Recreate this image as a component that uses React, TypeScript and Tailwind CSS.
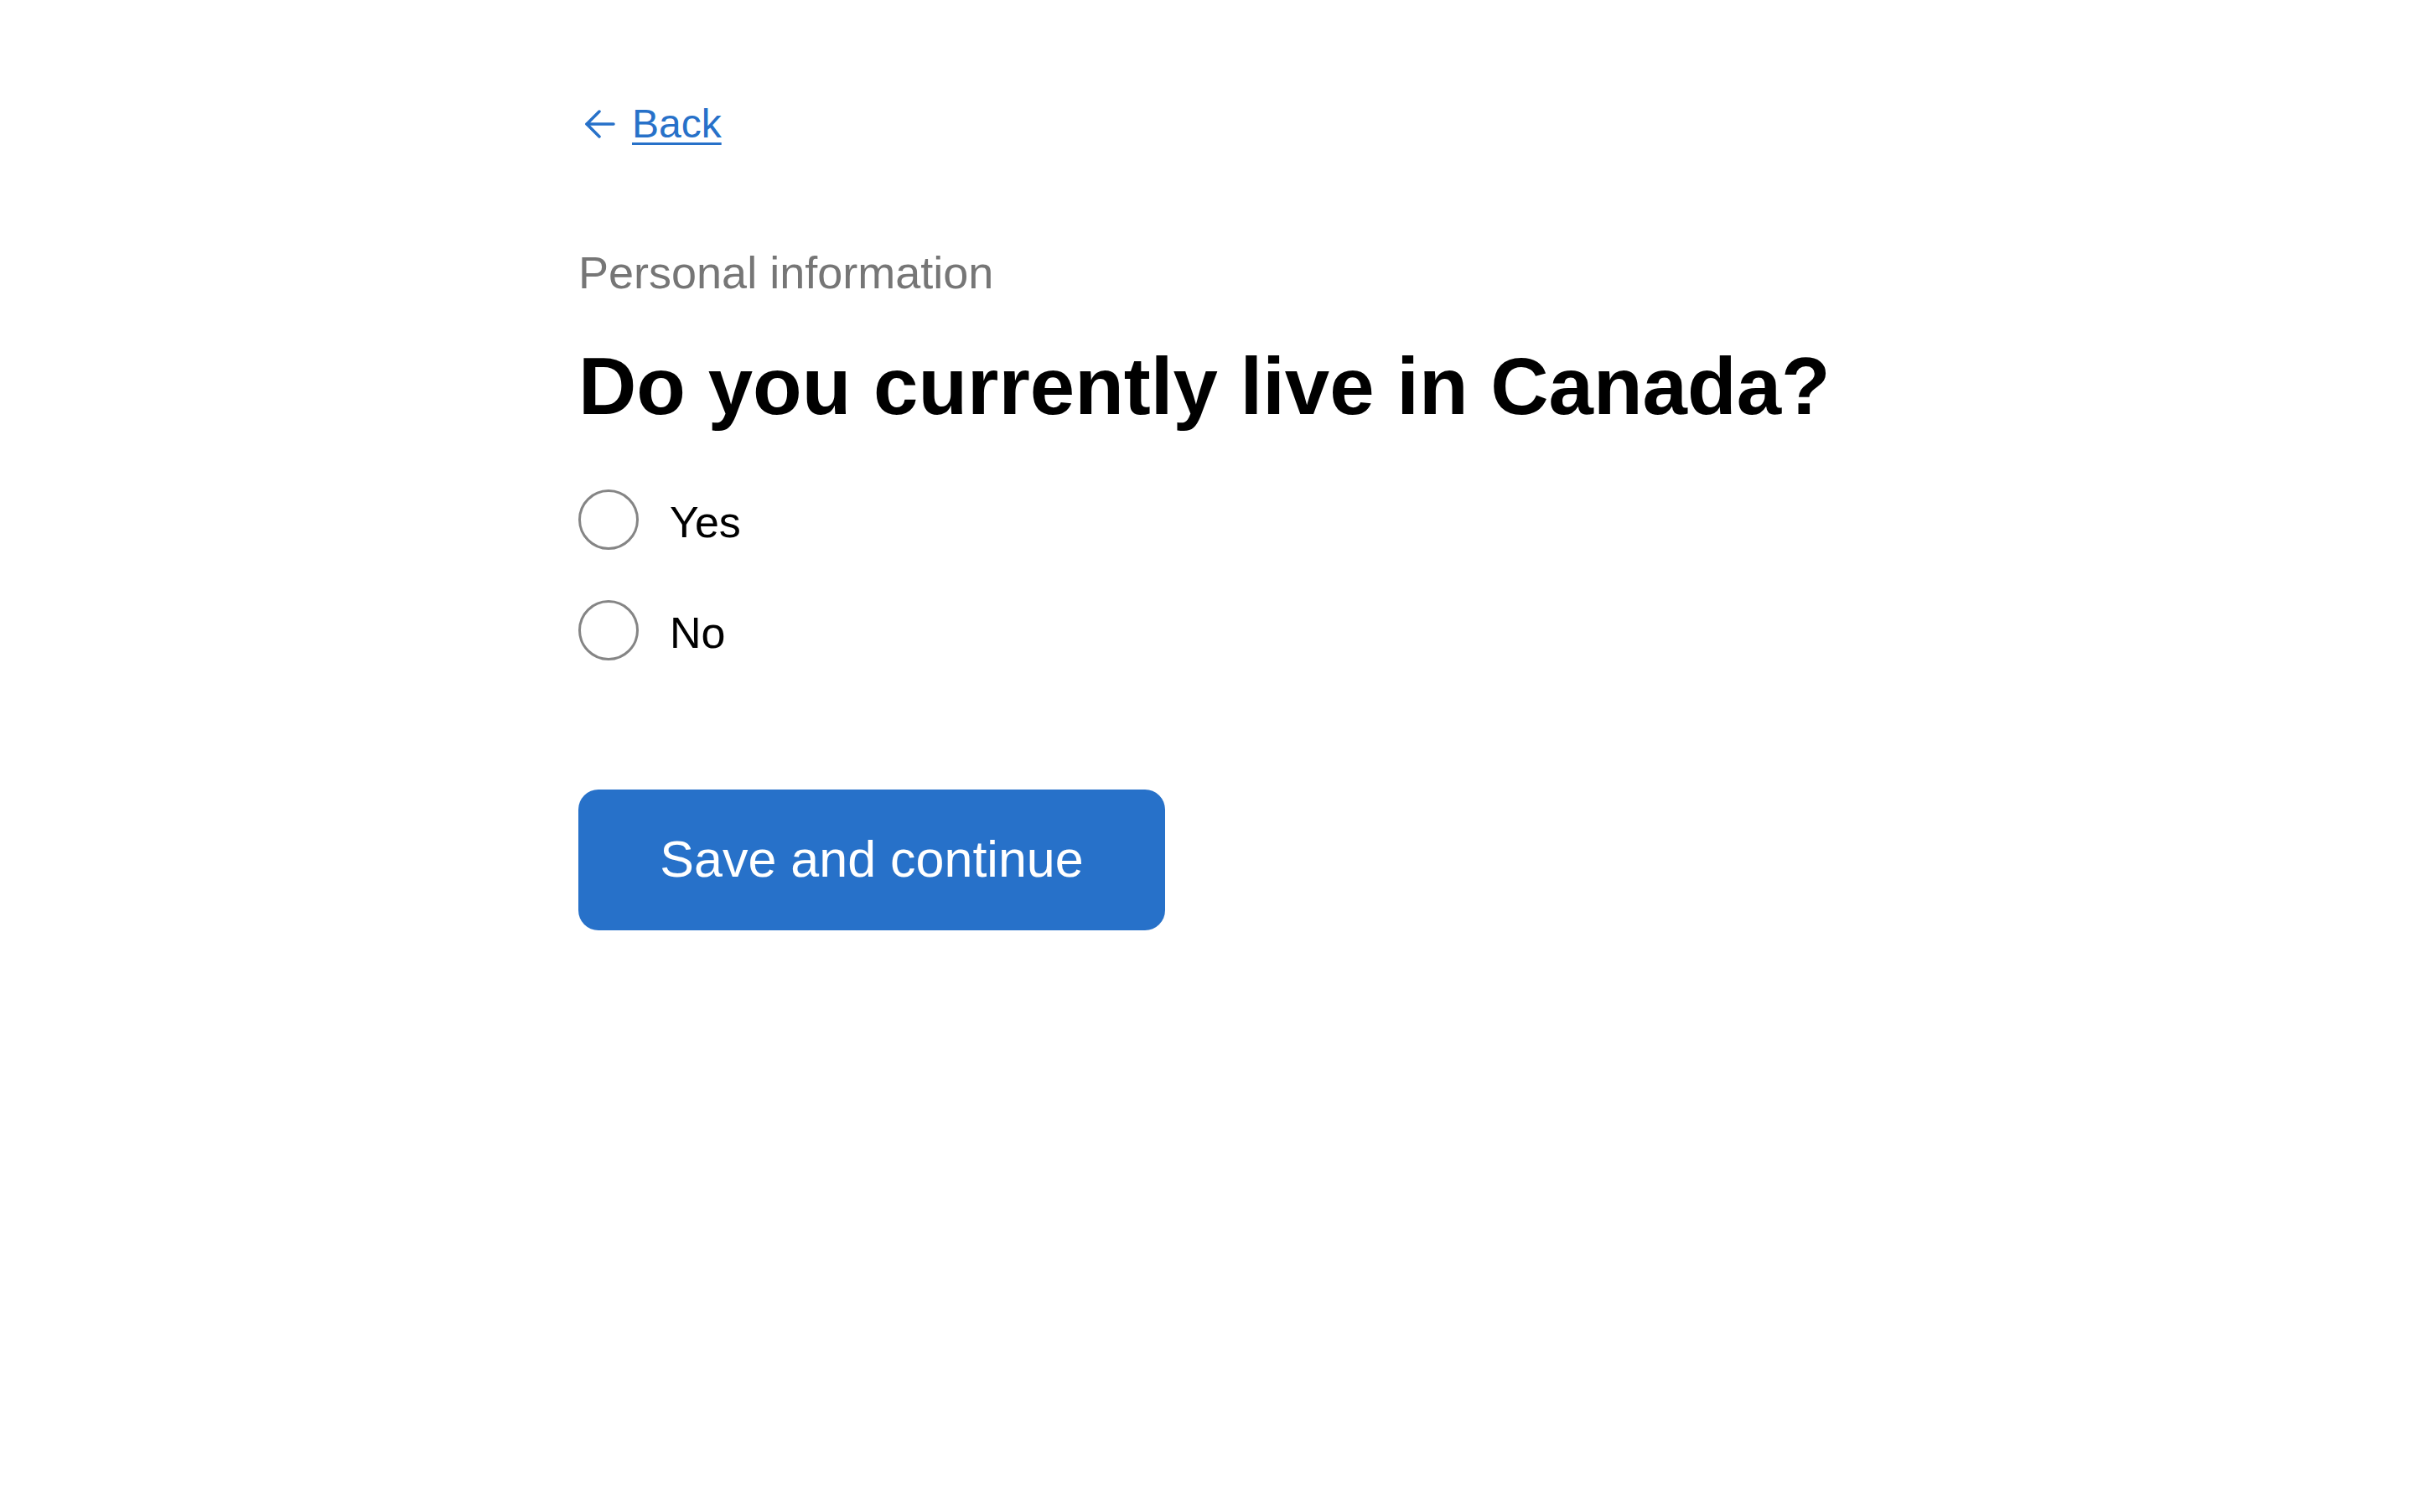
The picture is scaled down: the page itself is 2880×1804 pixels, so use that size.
import { useState } from "react"

const BLUE = "#2771c9"

function BackArrow() {
  return (
    <svg width="36" height="34" viewBox="0 0 36 34" fill="none" stroke={BLUE} strokeWidth="3.5" strokeLinecap="round" strokeLinejoin="round" aria-hidden="true">
      <path d="M34 17H2" />
      <path d="M17 2 2 17l15 15" />
    </svg>
  )
}

interface RadioOptionProps {
  label: string
  value: string
  checked: boolean
  onSelect: (v: string) => void
}

function RadioOption({ label, value, checked, onSelect }: RadioOptionProps) {
  return (
    <label className="flex items-start gap-[37px] cursor-pointer" onClick={() => onSelect(value)}>
      <span className="flex h-[72px] w-[72px] shrink-0 items-center justify-center rounded-full border-[3px] border-[#858585] bg-white">
        {checked && <span className="h-[40px] w-[40px] rounded-full bg-black" />}
      </span>
      <span className="pt-[8px] text-[52px] leading-[62px] text-black">{label}</span>
    </label>
  )
}

export default function App() {
  const [answer, setAnswer] = useState<string | null>(null)

  return (
    <div className="min-h-screen bg-white font-['Liberation_Sans',Arial,sans-serif]">
      <div className="mx-auto w-[1500px] pt-[118px]">
        <a href="#" className="flex h-[60px] w-fit items-center gap-[20px]" onClick={(e) => e.preventDefault()}>
          <span className="pl-[8px]">
            <BackArrow />
          </span>
          <span className="text-[48px] leading-[60px] text-[#2771c9] underline decoration-[3px] underline-offset-[6px]">
            Back
          </span>
        </a>

        <p className="mt-[115px] text-[54px] leading-[64px] text-[#767676]">Personal information</p>

        <h1 className="mt-[48px] text-[96px] font-bold leading-[112px] text-black">
          Do you currently live in Canada?
        </h1>

        <div className="mt-[67px] flex flex-col gap-[60px]">
          <RadioOption label="Yes" value="yes" checked={answer === "yes"} onSelect={setAnswer} />
          <RadioOption label="No" value="no" checked={answer === "no"} onSelect={setAnswer} />
        </div>

        <button
          type="button"
          className="mt-[154px] flex h-[168px] w-[700px] items-center justify-center rounded-[24px] bg-[#2771c9] text-[61px] text-white"
        >
          Save and continue
        </button>
      </div>
    </div>
  )
}
